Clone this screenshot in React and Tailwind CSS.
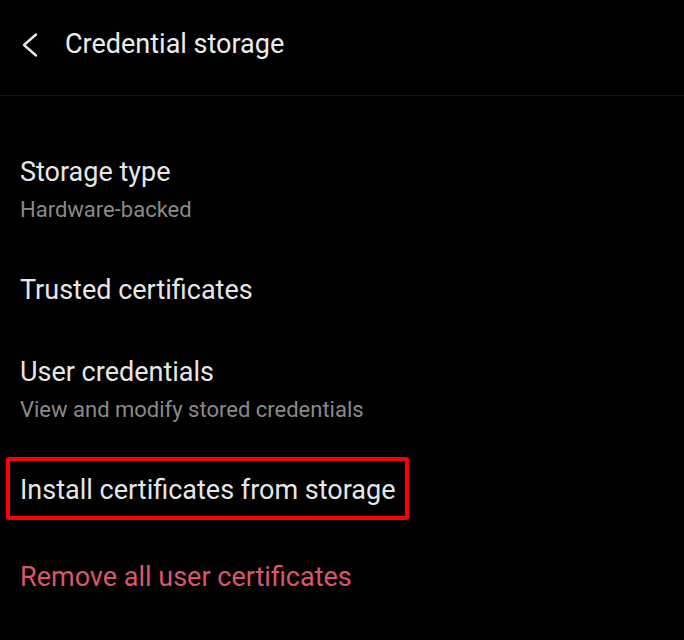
const Row = ({ title, subtitle, danger, children }) => (
    <div className="relative px-5 py-6">
        <div
            className={`text-[27px] leading-[34px] ${danger ? "text-[#d9566e]" : "text-[#e6e6e6]"}`}
        >
            {title}
        </div>
        {subtitle && (
            <div className="mt-[6px] text-[22px] leading-[30px] text-[#8a8a8a]">
                {subtitle}
            </div>
        )}
        {children}
    </div>
);

export default function App() {
    return (
        <div
            className="h-[640px] w-[684px] overflow-hidden bg-black"
            style={{ fontFamily: "Roboto, 'Noto Sans', sans-serif" }}
        >
            {/* Header */}
            <div className="flex h-[96px] items-center border-b border-[#161616] pb-[6px] pl-[21px]">
                <svg width="18" height="26" viewBox="0 0 18 26" fill="none" className="text-[#e6e6e6]">
                    <polyline
                        points="15,2.5 3,13 15,23.5"
                        stroke="currentColor"
                        strokeWidth="2.4"
                        strokeLinecap="round"
                        strokeLinejoin="round"
                    />
                </svg>
                <span className="ml-[26px] text-[27px] text-[#ececec]">
                    Credential storage
                </span>
            </div>

            <div className="pt-[35px]">
                <Row title="Storage type" subtitle="Hardware-backed" />
                <Row title="Trusted certificates" />
                <Row title="User credentials" subtitle="View and modify stored credentials" />
                <Row title="Install certificates from storage">
                    <div className="absolute left-[6px] top-[8px] h-[63px] w-[403px] rounded-[3px] border-[4px] border-[#ff0000]" />
                </Row>
                <div className="mt-[5px]">
                    <Row title="Remove all user certificates" danger />
                </div>
            </div>
        </div>
    );
}
